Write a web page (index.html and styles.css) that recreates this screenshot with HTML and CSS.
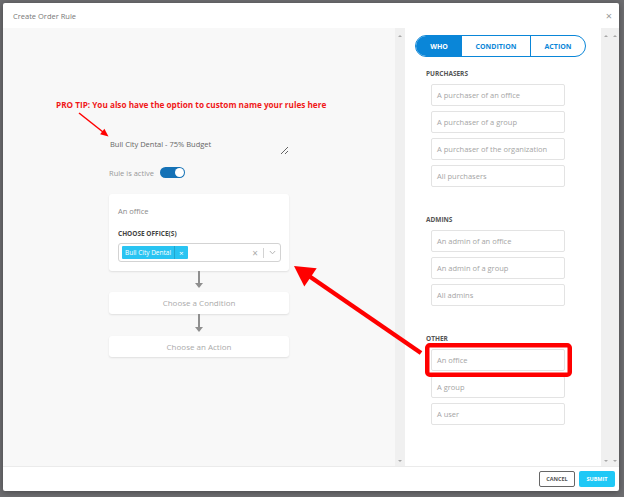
FILE: index.html
```html
<!DOCTYPE html>
<html lang="en">
<head>
  <meta charset="UTF-8">
  <title>Create Order Rule</title>
  <link rel="stylesheet" href="styles.css">
</head>
<body>

  <div class="modal">
    <div class="modal-header">
      <span class="title">Create Order Rule</span>
      <span class="close">&times;</span>
    </div>

    <div class="modal-body">
      <div class="builder">
        <div class="rule-col">
          <textarea class="rule-name">Bull City Dental - 75% Budget</textarea>
          <div class="active-row">
            <span>Rule is active</span>
            <span class="toggle"><span class="knob"></span></span>
          </div>

          <div class="card">
            <div class="card-title">An office</div>
            <div class="field-label">CHOOSE OFFICE(S)</div>
            <div class="select">
              <span class="chip"><span class="chip-text">Bull City Dental</span><span class="chip-x">&times;</span></span>
              <span class="select-tools">
                <span class="clear">&times;</span>
                <span class="sep"></span>
                <svg class="chevron" width="7" height="5" viewBox="0 0 7 5"><path d="M0.8 1 L3.5 3.8 L6.2 1" fill="none" stroke="#b5b5b5" stroke-width="1"/></svg>
              </span>
            </div>
          </div>

          <div class="connector"><div class="connector-line"></div><div class="connector-head"></div></div>
          <div class="step">Choose a Condition</div>
          <div class="connector long"><div class="connector-line"></div><div class="connector-head"></div></div>
          <div class="step">Choose an Action</div>
        </div>
      </div>

      <div class="scroll-track wide"><span class="up"></span><span class="down"></span></div>

      <div class="who-panel">
        <div class="tabs">
          <div class="tab who active">WHO</div>
          <div class="tab condition">CONDITION</div>
          <div class="tab action">ACTION</div>
        </div>

        <div class="section first">
          <div class="section-label">PURCHASERS</div>
          <div class="options">
            <div class="option">A purchaser of an office</div>
            <div class="option">A purchaser of a group</div>
            <div class="option">A purchaser of the organization</div>
            <div class="option">All purchasers</div>
          </div>
        </div>

        <div class="section">
          <div class="section-label">ADMINS</div>
          <div class="options">
            <div class="option">An admin of an office</div>
            <div class="option">An admin of a group</div>
            <div class="option">All admins</div>
          </div>
        </div>

        <div class="section">
          <div class="section-label">OTHER</div>
          <div class="options">
            <div class="option">An office</div>
            <div class="option">A group</div>
            <div class="option">A user</div>
          </div>
        </div>
      </div>

      <div class="scroll-track"><span class="up"></span><span class="down"></span></div>
      <div class="scroll-track"><span class="up"></span><span class="down"></span></div>
    </div>

    <div class="modal-footer">
      <button class="btn cancel">CANCEL</button>
      <button class="btn submit">SUBMIT</button>
    </div>
  </div>

  <div class="pro-tip">PRO TIP: You also have the option to custom name your rules here</div>

  <svg class="annotations" width="624" height="497" viewBox="0 0 624 497">
    <line x1="79" y1="113" x2="103" y2="132" stroke="#f00" stroke-width="1.5"/>
    <polygon points="108.5,136.5 100.1,134.3 104.4,128.8" fill="#f00"/>
    <line x1="421" y1="353" x2="309" y2="276" stroke="#f00" stroke-width="4.5"/>
    <polygon points="294,266 316.7,268.2 304.3,286.4" fill="#f00"/>
    <rect x="427.25" y="345.25" width="142.5" height="29.5" rx="2.5" fill="none" stroke="#f00" stroke-width="4.5"/>
  </svg>

</body>
</html>
```

FILE: styles.css
```css
* {
  box-sizing: border-box;
}
body {
  margin: 0;
  width: 624px;
  height: 497px;
  padding: 3px 5px 6px 3px;
  background: #6d6d70;
  font-family: "Open Sans", Arial, sans-serif;
  position: relative;
  overflow: hidden;
}
.modal {
  width: 616px;
  height: 488px;
  background: #fff;
  display: flex;
  flex-direction: column;
  border-radius: 2px;
  box-shadow: 0 1px 6px rgba(0,0,0,0.35);
}
.modal-header {
  height: 25px;
  display: flex;
  align-items: center;
  justify-content: space-between;
  padding: 0 7px 0 10px;
  font-size: 7.5px;
  color: #777;
}
.close {
  font-size: 11px;
  color: #999;
}
.modal-body {
  flex: 1;
  display: flex;
  min-height: 0;
}
.builder {
  width: 392px;
  background: #f8f8f8;
  padding-top: 107px;
}
.rule-col {
  width: 180px;
  margin: 0 auto;
  display: flex;
  flex-direction: column;
}
.rule-name {
  width: 180px;
  height: 20px;
  padding: 4px 1px;
  border: none;
  background: transparent;
  font-family: inherit;
  font-size: 7.5px;
  line-height: 11px;
  color: #666;
  resize: vertical;
  outline: none;
  overflow: hidden;
}
.active-row {
  margin-top: 12px;
  height: 11px;
  display: flex;
  align-items: center;
  gap: 6px;
  font-size: 7.5px;
  color: #999;
}
.toggle {
  width: 25px;
  height: 11px;
  border-radius: 6px;
  background: #1572b6;
  display: flex;
  justify-content: flex-end;
  align-items: center;
  padding: 0 1px;
}
.knob {
  width: 9px;
  height: 9px;
  border-radius: 50%;
  background: #fff;
}
.card {
  margin-top: 16px;
  background: #fff;
  border-radius: 3px;
  box-shadow: 0 1px 2px rgba(0,0,0,0.1);
  padding: 12px 8px 9px 9px;
}
.card-title {
  font-size: 7.5px;
  line-height: 10px;
  color: #8a8a8a;
}
.field-label {
  margin-top: 13px;
  font-size: 6.5px;
  line-height: 10px;
  font-weight: bold;
  color: #444;
}
.select {
  margin-top: 4px;
  height: 19px;
  border: 1px solid #d3d3d3;
  border-radius: 3px;
  display: flex;
  align-items: center;
  justify-content: space-between;
  padding: 0 4px 0 3px;
}
.chip {
  height: 13px;
  display: flex;
  align-items: center;
  background: #29c4f2;
  color: #fff;
  font-size: 6.5px;
  border-radius: 1px;
}
.chip-text {
  padding: 0 3px;
}
.chip-x {
  height: 13px;
  line-height: 13px;
  padding: 0 4px;
  border-left: 1px solid rgba(0,0,0,0.15);
  font-size: 8px;
}
.select-tools {
  display: flex;
  align-items: center;
}
.clear {
  font-size: 10px;
  color: #aaa;
}
.sep {
  width: 1px;
  height: 10px;
  background: #d3d3d3;
  margin: 0 5px;
}
.connector {
  height: 21px;
  display: flex;
  flex-direction: column;
  align-items: center;
}
.connector.long {
  height: 22px;
}
.connector-line {
  width: 1.5px;
  flex: 1;
  background: #8f8f8f;
}
.connector-head {
  border-left: 4px solid transparent;
  border-right: 4px solid transparent;
  border-top: 5px solid #8f8f8f;
  margin-bottom: 4px;
}
.step {
  height: 21.5px;
  background: #fff;
  border-radius: 3px;
  box-shadow: 0 1px 2px rgba(0,0,0,0.1);
  display: flex;
  align-items: center;
  justify-content: center;
  font-size: 8px;
  color: #aaa;
}
.scroll-track {
  width: 9px;
  background: #f0f0f0;
  display: flex;
  flex-direction: column;
  justify-content: space-between;
  align-items: center;
  padding: 7px 0 4px;
}
.scroll-track.wide {
  width: 10px;
}
.up {
  border-left: 2px solid transparent;
  border-right: 2px solid transparent;
  border-bottom: 2.5px solid #a8a8a8;
}
.down {
  border-left: 2px solid transparent;
  border-right: 2px solid transparent;
  border-top: 2.5px solid #a8a8a8;
}
.who-panel {
  width: 196px;
  background: #fff;
  padding: 7px 0 0 10px;
}
.tabs {
  width: 171px;
  height: 22px;
  display: flex;
  border: 1px solid #0a86d8;
  border-radius: 11px;
  overflow: hidden;
}
.tab {
  display: flex;
  align-items: center;
  justify-content: center;
  font-size: 7px;
  font-weight: bold;
  color: #0a86d8;
}
.tab.active {
  background: #0a86d8;
  color: #fff;
}
.tab.who {
  width: 46px;
}
.tab.condition {
  width: 68px;
}
.tab.action {
  flex: 1;
  border-left: 1px solid #0a86d8;
}
.section {
  margin-top: 28px;
}
.section.first {
  margin-top: 12px;
}
.section-label {
  margin-left: 11px;
  height: 10px;
  line-height: 10px;
  font-size: 6.5px;
  font-weight: bold;
  color: #555;
  margin-bottom: 5px;
}
.options {
  margin-left: 16px;
  display: flex;
  flex-direction: column;
  gap: 5px;
}
.option {
  width: 134px;
  height: 22px;
  border: 1px solid #e3e3e3;
  border-radius: 2px;
  display: flex;
  align-items: center;
  padding-left: 5px;
  font-size: 7.5px;
  color: #a5a5a5;
}
.modal-footer {
  height: 25px;
  border-top: 1px solid #ebebeb;
  display: flex;
  justify-content: flex-end;
  align-items: center;
  gap: 4px;
  padding-right: 4px;
}
.btn {
  width: 36px;
  height: 16px;
  padding: 0;
  font-family: inherit;
  font-size: 5.5px;
  font-weight: bold;
  border-radius: 2px;
}
.cancel {
  background: #fff;
  border: 1px solid #666;
  color: #555;
}
.submit {
  background: #1fc8f6;
  border: none;
  color: #fff;
}
.pro-tip {
  position: absolute;
  left: 56px;
  top: 99px;
  font-size: 8.2px;
  line-height: 11px;
  font-weight: bold;
  color: #f01818;
  white-space: nowrap;
}
.annotations {
  position: absolute;
  left: 0;
  top: 0;
  pointer-events: none;
}
```
